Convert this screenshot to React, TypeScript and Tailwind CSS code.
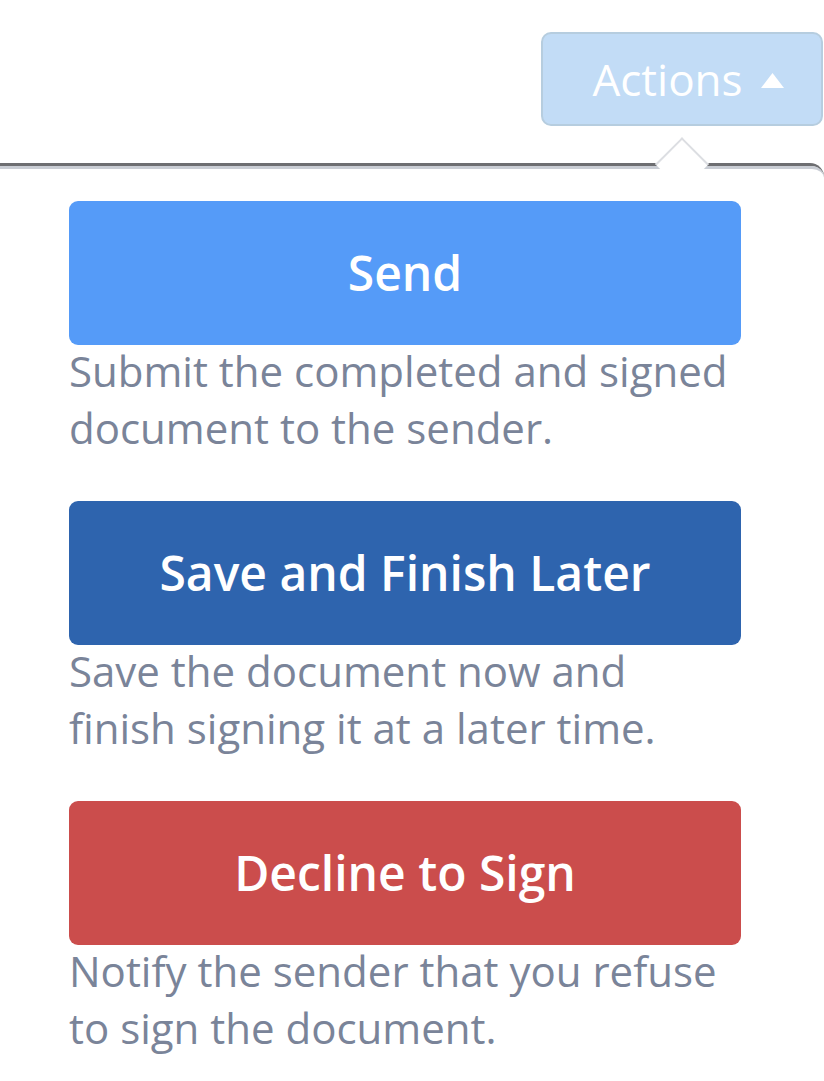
import React from "react";

const items = [
  {
    label: "Send",
    bg: "bg-[#559bf8]",
    desc: ["Submit the completed and signed", "document to the sender."],
  },
  {
    label: "Save and Finish Later",
    bg: "bg-[#2e64ae]",
    desc: ["Save the document now and", "finish signing it at a later time."],
  },
  {
    label: "Decline to Sign",
    bg: "bg-[#cb4d4c]",
    desc: ["Notify the sender that you refuse", "to sign the document."],
  },
];

export default function App() {
  return (
    <div className="w-[824px] h-[1081px] bg-white overflow-hidden font-['Open_Sans',sans-serif]">
      <div className="flex justify-end pt-[32px] pr-[1px]">
        <button className="w-[282px] h-[94px] rounded-[10px] border-2 border-[#b6cddf] bg-[#c2dcf6] flex items-center justify-center gap-[18px] pl-[12px] text-white">
          <span className="text-[44px] leading-none">Actions</span>
          <svg width="23" height="15" viewBox="0 0 23 15" className="mt-[2px]">
            <polygon points="11.5,0 23,15 0,15" fill="white" />
          </svg>
        </button>
      </div>

      <div className="relative mt-[37px] border-t-[3px] border-[#6d6e71] rounded-tr-[14px]">
        <div className="absolute left-[663px] top-[-21px] w-[38px] h-[38px] rotate-45 bg-white border-l-2 border-t-2 border-[#dcdee2] z-10" />
        <div className="border-t-[3px] border-[#c9cdd4] rounded-tr-[12px] pt-[32px] pl-[69px] pr-[83px] flex flex-col gap-[42px]">
          {items.map((it) => (
            <div key={it.label} className="flex flex-col">
              <div
                className={`${it.bg} h-[144px] rounded-[9px] flex items-center justify-center text-white font-semibold text-[48px] leading-none`}
              >
                {it.label}
              </div>
              <div className="text-[#7a8499] text-[42px] leading-[57px] whitespace-nowrap -mt-[3px] mb-[3px]">
                {it.desc.map((d) => (
                  <div key={d}>{d}</div>
                ))}
              </div>
            </div>
          ))}
        </div>
      </div>
    </div>
  );
}
